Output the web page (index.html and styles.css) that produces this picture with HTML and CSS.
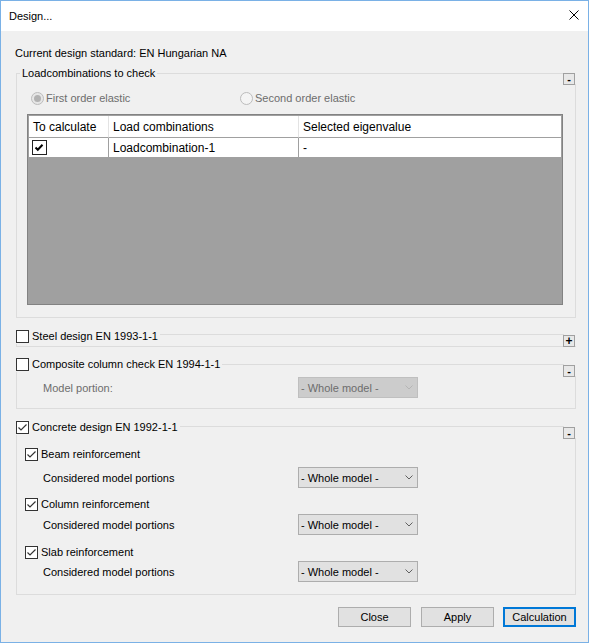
FILE: index.html
```html
<!DOCTYPE html>
<html lang="en">
<head>
<meta charset="utf-8">
<title>Design...</title>
<link rel="stylesheet" href="styles.css">
</head>
<body>
<div class="window">
  <header class="titlebar">
    <span class="title">Design...</span>
    <svg class="close" width="10" height="10" viewBox="0 0 10 10" aria-label="Close"><path d="M0.5 0.5 L9.5 9.5 M9.5 0.5 L0.5 9.5" stroke="#000" stroke-width="1" fill="none"/></svg>
  </header>

  <main class="content">
    <div class="standard">Current design standard: EN Hungarian NA</div>

    <section class="group group-load">
      <div class="group-head head-text"><span class="legend">Loadcombinations to check</span></div>
      <button class="toggle toggle-load">-</button>
      <div class="radios">
        <label class="radio radio-first"><span class="radio-btn checked"></span>First order elastic</label>
        <label class="radio"><span class="radio-btn"></span>Second order elastic</label>
      </div>
      <div class="grid">
        <div class="grid-row grid-header">
          <div class="cell">To calculate</div>
          <div class="cell">Load combinations</div>
          <div class="cell">Selected eigenvalue</div>
        </div>
        <div class="grid-row grid-body">
          <div class="cell"><span class="grid-check"><svg width="13" height="13" viewBox="0 0 13 13"><path d="M2.5 6.5 L4.8 8.8 L9.5 3.8" fill="none" stroke="#000" stroke-width="2"/></svg></span></div>
          <div class="cell">Loadcombination-1</div>
          <div class="cell">-</div>
        </div>
      </div>
    </section>

    <section class="group group-steel">
      <div class="group-head head-check"><span class="legend"><span class="cb"></span>Steel design EN 1993-1-1</span></div>
      <button class="toggle toggle-plus">+</button>
    </section>

    <section class="group group-composite">
      <div class="group-head head-check"><span class="legend"><span class="cb"></span>Composite column check EN 1994-1-1</span></div>
      <button class="toggle">-</button>
      <div class="field-row row-model">
        <span class="field-label disabled">Model portion:</span>
        <span class="select select-disabled">- Whole model -<svg width="8" height="5" viewBox="0 0 8 5"><path d="M0.5 0.5 L4 4 L7.5 0.5" fill="none" stroke="#b5b5b5"/></svg></span>
      </div>
    </section>

    <section class="group group-concrete">
      <div class="group-head head-check"><span class="legend"><span class="cb checked"><svg width="11" height="11" viewBox="0 0 11 11"><path d="M1.5 5.5 L4 8 L9.5 2.5" fill="none" stroke="#333" stroke-width="1.2"/></svg></span>Concrete design EN 1992-1-1</span></div>
      <button class="toggle">-</button>

      <label class="sub-check sub-beam"><span class="cb checked"><svg width="11" height="11" viewBox="0 0 11 11"><path d="M1.5 5.5 L4 8 L9.5 2.5" fill="none" stroke="#333" stroke-width="1.2"/></svg></span>Beam reinforcement</label>
      <div class="field-row row-beam">
        <span class="field-label">Considered model portions</span>
        <span class="select">- Whole model -<svg width="8" height="5" viewBox="0 0 8 5"><path d="M0.5 0.5 L4 4 L7.5 0.5" fill="none" stroke="#606060"/></svg></span>
      </div>

      <label class="sub-check sub-column"><span class="cb checked"><svg width="11" height="11" viewBox="0 0 11 11"><path d="M1.5 5.5 L4 8 L9.5 2.5" fill="none" stroke="#333" stroke-width="1.2"/></svg></span>Column reinforcement</label>
      <div class="field-row row-column">
        <span class="field-label">Considered model portions</span>
        <span class="select">- Whole model -<svg width="8" height="5" viewBox="0 0 8 5"><path d="M0.5 0.5 L4 4 L7.5 0.5" fill="none" stroke="#606060"/></svg></span>
      </div>

      <label class="sub-check sub-slab"><span class="cb checked"><svg width="11" height="11" viewBox="0 0 11 11"><path d="M1.5 5.5 L4 8 L9.5 2.5" fill="none" stroke="#333" stroke-width="1.2"/></svg></span>Slab reinforcement</label>
      <div class="field-row row-slab">
        <span class="field-label">Considered model portions</span>
        <span class="select">- Whole model -<svg width="8" height="5" viewBox="0 0 8 5"><path d="M0.5 0.5 L4 4 L7.5 0.5" fill="none" stroke="#606060"/></svg></span>
      </div>
    </section>

    <div class="buttons">
      <button class="btn btn-close">Close</button>
      <button class="btn">Apply</button>
      <button class="btn btn-default">Calculation</button>
    </div>
  </main>
</div>
</body>
</html>
```

FILE: styles.css
```css
* { box-sizing: border-box; }
html, body { margin: 0; padding: 0; }
body {
  background: #fff;
  font-family: "Liberation Sans", Arial, sans-serif;
  font-size: 11px;
  color: #000;
}

.window {
  width: 589px;
  height: 643px;
  border: 1px solid #7ab1e6;
  background: #f0f0f0;
  display: flex;
  flex-direction: column;
  overflow: hidden;
}

.titlebar {
  flex: none;
  height: 30px;
  background: #fff;
  display: flex;
  align-items: center;
  justify-content: space-between;
  padding: 0 9px 0 8px;
}
.title { line-height: 15px; }
.close { display: block; margin-bottom: 2px; }

.content {
  display: flex;
  flex-direction: column;
  padding: 15px 12px 0 15px;
}
.standard { line-height: 15px; margin-left: -1px; }

/* group boxes */
.group {
  position: relative;
  border: 1px solid #dcdcdc;
}
.group-head { display: flex; height: 15px; }
.legend {
  display: flex;
  align-items: center;
  gap: 3px;
  background: #f0f0f0;
  line-height: 15px;
  white-space: nowrap;
}
.head-text { margin: -8px 0 0 3px; }
.head-text .legend { padding: 0 2px; }
.head-check { margin-left: -1px; }
.head-check .legend { padding-right: 2px; }

.group-load { margin-top: 12px; padding-bottom: 12px; }
.group-steel { margin-top: 16px; padding-bottom: 2px; }
.group-steel .group-head { margin-top: -6px; }
.group-composite { margin-top: 17px; padding-bottom: 10px; }
.group-composite .group-head { margin-top: -8px; }
.group-concrete { margin-top: 17px; padding-bottom: 12px; }
.group-concrete .group-head { margin-top: -7px; }

.toggle {
  position: absolute;
  top: 0;
  right: 0;
  width: 12px;
  height: 12px;
  margin: 0;
  padding: 0;
  border: 1px solid #a0a0a0;
  background: #e8e8e8;
  box-shadow: 1px -1px 0 #f0f0f0;
  font-family: "Liberation Sans", Arial, sans-serif;
  font-size: 11px;
  font-weight: bold;
  line-height: 9px;
  text-align: center;
  color: #000;
}
.toggle-load { top: -1px; }
.toggle-plus { font-size: 12px; line-height: 10px; }

/* checkbox */
.cb {
  flex: none;
  width: 13px;
  height: 13px;
  border: 1px solid #333;
  background: #fff;
  display: flex;
  align-items: center;
  justify-content: center;
}
.cb svg { display: block; }

/* radios */
.radios {
  display: flex;
  align-items: center;
  height: 15px;
  margin-top: 10px;
  padding-left: 14px;
}
.radio {
  display: flex;
  align-items: center;
  gap: 2px;
  color: #6d6d6d;
  line-height: 15px;
}
.radio-first { width: 209px; }
.radio-btn {
  width: 13px;
  height: 13px;
  border: 1px solid #bcbcbc;
  border-radius: 50%;
  background: #f4f4f4;
  display: flex;
  align-items: center;
  justify-content: center;
}
.radio-btn.checked { background: #e6e6e6; }
.radio-btn.checked::after {
  content: "";
  width: 7px;
  height: 7px;
  border-radius: 50%;
  background: #b2b2b2;
}

/* data grid */
.grid {
  margin: 8px 12px 0 10px;
  height: 191px;
  border: 1px solid #828282;
  padding: 1px;
  background: #a0a0a0;
  font-size: 12px;
}
.grid-row {
  display: grid;
  grid-template-columns: 80px 190px 1fr;
  background: #fff;
}
.cell {
  display: flex;
  align-items: center;
  padding-left: 4px;
  white-space: nowrap;
}
.grid-header .cell {
  height: 22px;
  border-right: 1px solid #e3e3e3;
  border-bottom: 1px solid #a0a0a0;
}
.grid-body .cell {
  height: 20px;
  border-right: 1px solid #a0a0a0;
  border-bottom: 1px solid #a0a0a0;
}
.grid-row .cell:last-child { border-right: none; }
.grid-body .cell:first-child { padding-left: 3px; }
.grid-check {
  width: 15px;
  height: 15px;
  border: 1px solid #222;
  background: #fff;
  display: flex;
  align-items: center;
  justify-content: center;
}
.grid-check svg { display: block; }

/* field rows */
.field-row {
  display: grid;
  grid-template-columns: 255px 120px;
  align-items: center;
  padding-left: 26px;
}
.field-label { line-height: 15px; padding-top: 2px; }
.field-label.disabled { color: #6d6d6d; }
.select {
  height: 21px;
  border: 1px solid #adadad;
  background: #e1e1e1;
  display: flex;
  align-items: center;
  justify-content: space-between;
  padding: 0 4px 0 2px;
  white-space: nowrap;
}
.select svg { display: block; }
.select-disabled {
  background: #cccccc;
  border-color: #bfbfbf;
  color: #6d6d6d;
}
.row-model { margin-top: 5px; }

.sub-check {
  display: flex;
  align-items: center;
  gap: 3px;
  height: 15px;
  line-height: 15px;
  padding-left: 8px;
}
.sub-beam { margin-top: 12px; }
.row-beam { margin-top: 5px; }
.sub-column { margin-top: 9px; }
.row-column { margin-top: 2px; }
.sub-slab { margin-top: 10px; }
.row-slab { margin-top: 1px; }

/* buttons */
.buttons {
  display: flex;
  justify-content: flex-end;
  gap: 9px;
  margin-top: 12px;
}
.btn {
  width: 73px;
  height: 20px;
  margin: 0;
  padding: 0;
  border: 1px solid #adadad;
  background: #e1e1e1;
  font-family: "Liberation Sans", Arial, sans-serif;
  font-size: 11px;
  color: #000;
}
.btn-close { margin-right: 1px; }
.btn-default { border: 2px solid #0078d7; }
```
